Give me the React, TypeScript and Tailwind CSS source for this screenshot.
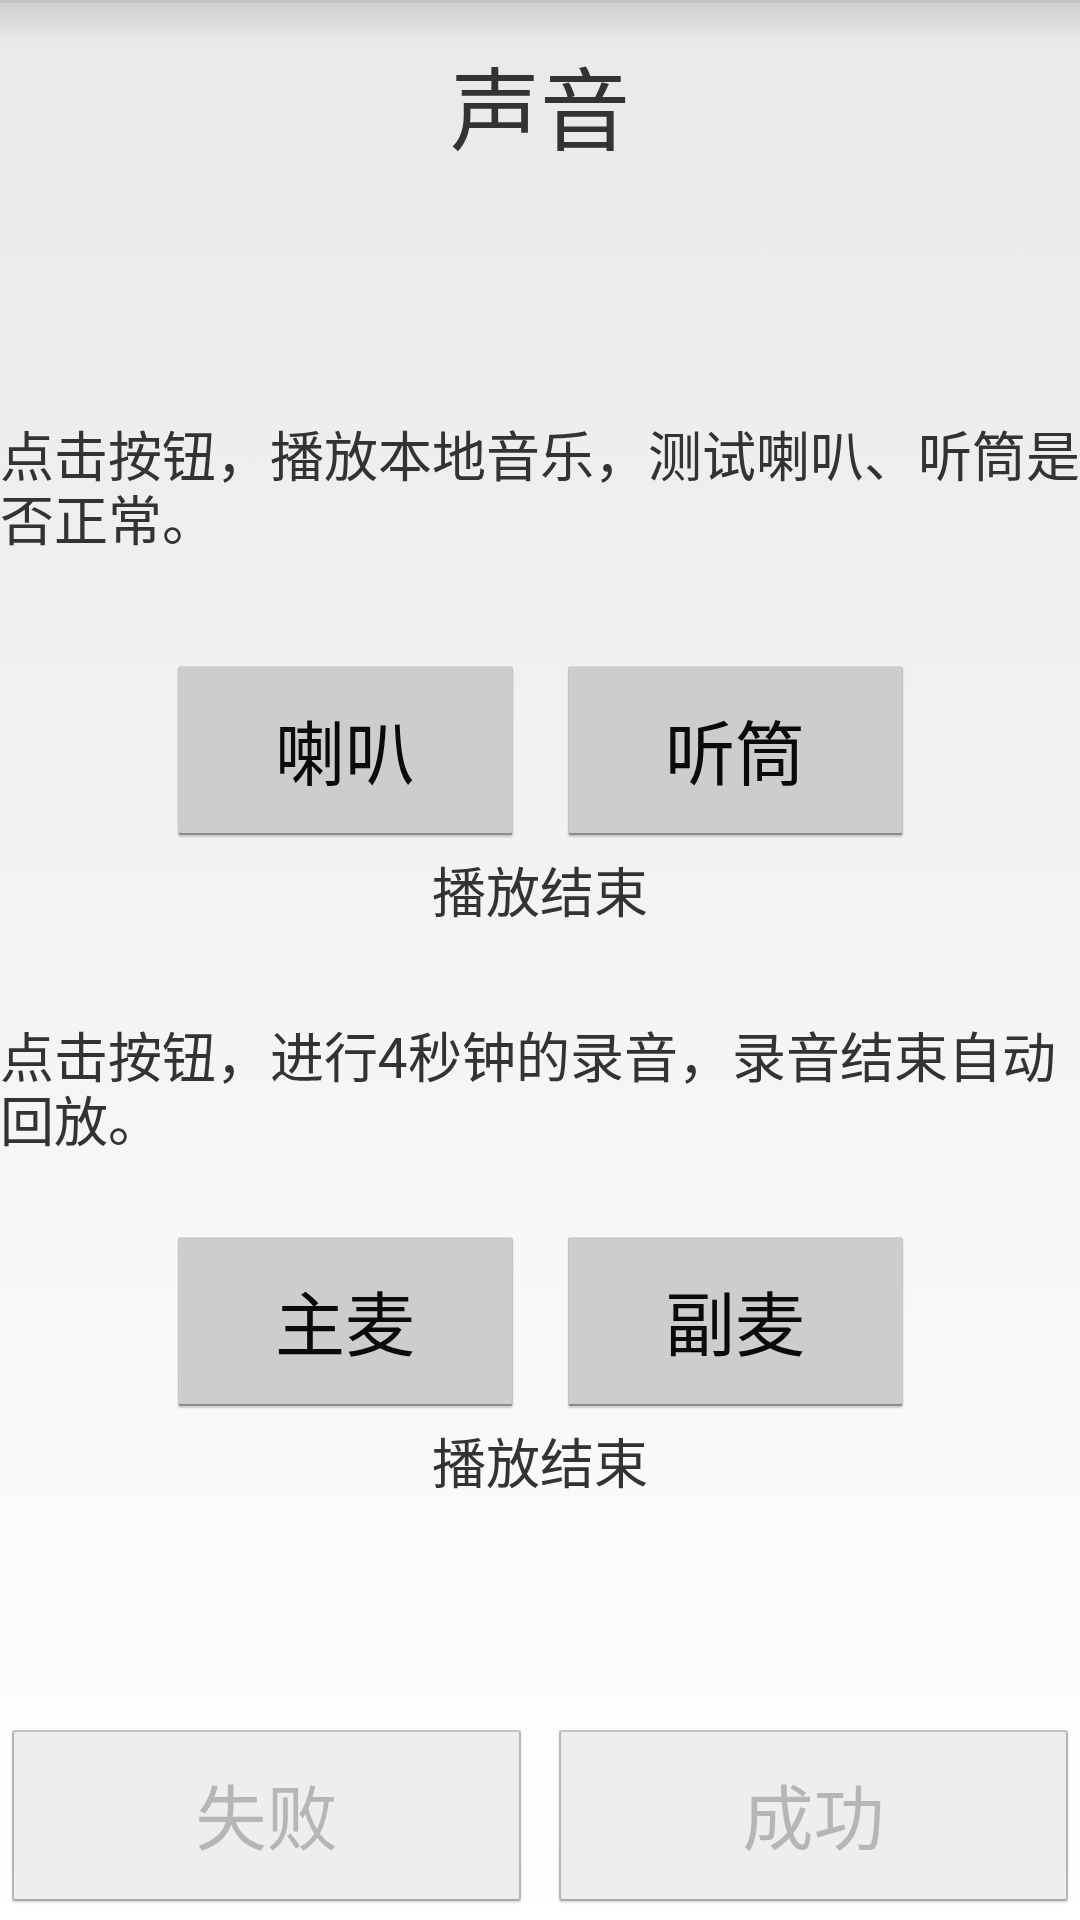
import React from "react";

const font = "font-['Noto_Sans_CJK_SC','Noto_Sans_CJK_JP',sans-serif]";

function TestButton({ label }: { label: string }) {
  return (
    <button className="w-[335px] h-[169px] rounded-[3px] bg-[#cdcdcd] border-t border-t-[#d6d6d6] border-x border-x-[#c4c4c4] border-b-2 border-b-[#8c8c8c] shadow-[0_2px_2px_rgba(0,0,0,0.18)] text-[70px] leading-none text-[#0a0a0a] flex items-center justify-center">
      {label}
    </button>
  );
}

function ResultButton({ label }: { label: string }) {
  return (
    <button
      disabled
      className="flex-1 h-[171px] rounded-[3px] bg-[#eeeeee] border-2 border-[#c2c2c2] border-x-[#b6b6b6] border-b-[#a9a9a9] shadow-[0_2px_2px_rgba(0,0,0,0.12)] text-[71px] leading-none text-[#b6b6b6] flex items-center justify-center pb-[4px]"
    >
      {label}
    </button>
  );
}

export default function App() {
  return (
    <div
      className={`relative w-[1080px] min-h-[1920px] flex flex-col bg-gradient-to-b from-[#e9e9e9] to-[#ffffff] text-[#333333] ${font}`}
    >
      {/* status bar shadow */}
      <div className="absolute inset-x-0 top-0 pointer-events-none">
        <div className="h-[3px] bg-[#c3c3c3]" />
        <div className="h-[40px] bg-gradient-to-b from-[rgba(0,0,0,0.11)] to-transparent" />
      </div>

      <h1 className="mt-[59px] text-center text-[90px] leading-[90px] font-normal">声音</h1>

      <p className="mt-[273px] text-[54px] leading-[64px]">
        点击按钮，播放本地音乐，测试喇叭、听筒是否正常。
      </p>

      <div className="mt-[116px] flex justify-center gap-[55px]">
        <TestButton label="喇叭" />
        <TestButton label="听筒" />
      </div>
      <div className="mt-[23px] text-center text-[54px] leading-[64px]">播放结束</div>

      <p className="mt-[101px] text-[54px] leading-[64px]">
        点击按钮，进行4秒钟的录音，录音结束自动回放。
      </p>

      <div className="mt-[86px] flex justify-center gap-[55px]">
        <TestButton label="主麦" />
        <TestButton label="副麦" />
      </div>
      <div className="mt-[23px] text-center text-[54px] leading-[64px]">播放结束</div>

      <div className="flex-1" />

      <div className="flex gap-[38px] px-[12px] pb-[19px]">
        <ResultButton label="失败" />
        <ResultButton label="成功" />
      </div>
    </div>
  );
}
